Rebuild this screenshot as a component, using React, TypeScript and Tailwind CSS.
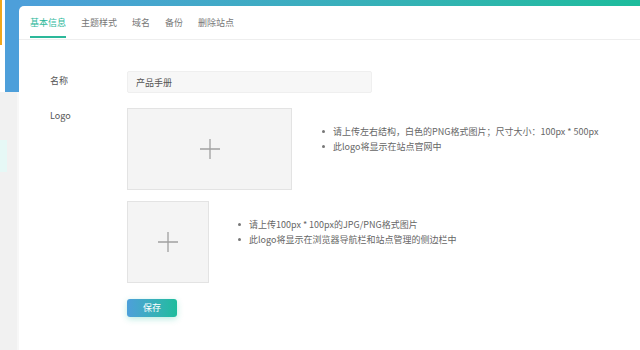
import React, { useState } from 'react';

const tabs = ['基本信息', '主题样式', '域名', '备份', '删除站点'];

const Plus = ({ size }: { size: number }) => (
  <svg width={size} height={size} viewBox="0 0 20 20" className="text-[#a0a0a0]">
    <path d="M10 0V20M0 10H20" stroke="currentColor" strokeWidth="1.3" fill="none" />
  </svg>
);

const Tips = ({ lines }: { lines: string[] }) => (
  <ul className="pt-[16px] flex flex-col">
    {lines.map((l) => (
      <li key={l} className="flex items-center h-[15px] text-[9px] text-[#666]">
        <span className="w-[3px] h-[3px] rounded-full bg-[#777] mr-[8px]" />
        {l}
      </li>
    ))}
  </ul>
);

const App = () => {
  const [active, setActive] = useState(0);
  const [name, setName] = useState('产品手册');

  return (
    <div className="w-[640px] h-[350px] overflow-hidden flex bg-white font-['Noto_Sans_CJK_SC','Noto_Sans',sans-serif]">
      {/* side strip */}
      <div className="w-[19px] flex flex-col shrink-0">
        <div className="h-[92px] flex bg-white">
          <div className="w-[2px] h-[45px] bg-[#f0a71c]" />
          <div className="w-[3px]" />
          <div className="w-[14px] bg-[#4d9fda]" />
        </div>
        <div className="flex-1 flex bg-[#f1f1f1]">
          <div className="w-[17px] flex flex-col">
            <div className="h-[48px]" />
            <div className="w-[7px] h-[32px] bg-[#e6f8f6]" />
          </div>
          <div className="w-[2px] bg-[#f7f7f7]" />
        </div>
      </div>

      <div className="flex-1 flex flex-col">
        <div className="h-[6px] bg-gradient-to-r from-[#4d9fda] to-[#1cbc9c]" />
        <div className="flex-1 bg-[#4d9fda]">
          <div className="h-full bg-white rounded-tl-[5px]">
            <div className="h-[34px] flex gap-[15px] pl-[11px] border-b border-[#eeeeee]">
              {tabs.map((t, i) => (
                <button
                  key={t}
                  onClick={() => setActive(i)}
                  className={`relative h-full flex items-center text-[9px] ${active === i ? 'text-[#2cb89a]' : 'text-[#777]'}`}
                >
                  {t}
                  {active === i && <span className="absolute left-0 right-0 bottom-[1px] h-[2px] bg-[#2cb89a]" />}
                </button>
              ))}
            </div>

            <div className="pl-[31px] pt-[31px] flex flex-col">
              <div className="flex items-center">
                <label className="w-[77px] text-[9px] text-[#555] pb-[3px]">名称</label>
                <input
                  value={name}
                  onChange={(e) => setName(e.target.value)}
                  className="w-[245px] h-[22px] px-[8px] bg-[#f7f7f7] border border-[#efefef] rounded-[2px] text-[9px] text-[#555] outline-none"
                />
              </div>

              <div className="flex mt-[15px]">
                <label className="w-[77px] text-[9px] text-[#555] pt-[1px]">Logo</label>
                <div className="flex flex-col">
                  <div className="flex">
                    <div className="w-[165px] h-[82px] bg-[#f4f4f4] border border-[#e3e3e3] flex items-center justify-center">
                      <Plus size={20} />
                    </div>
                    <div className="ml-[30px]">
                      <Tips lines={['请上传左右结构，白色的PNG格式图片；尺寸大小：100px * 500px', '此logo将显示在站点官网中']} />
                    </div>
                  </div>
                  <div className="flex mt-[11px]">
                    <div className="w-[82px] h-[82px] bg-[#f4f4f4] border border-[#e3e3e3] flex items-center justify-center">
                      <Plus size={20} />
                    </div>
                    <div className="ml-[29px]">
                      <Tips lines={['请上传100px * 100px的JPG/PNG格式图片', '此logo将显示在浏览器导航栏和站点管理的侧边栏中']} />
                    </div>
                  </div>
                  <button className="mt-[16px] w-[50px] h-[18px] rounded-[3px] bg-gradient-to-r from-[#4d9fda] to-[#1cbc9c] text-white text-[9px] shadow-[0_2px_6px_rgba(28,188,156,0.3)]">
                    保存
                  </button>
                </div>
              </div>
            </div>
          </div>
        </div>
      </div>
    </div>
  );
};

export default App;
